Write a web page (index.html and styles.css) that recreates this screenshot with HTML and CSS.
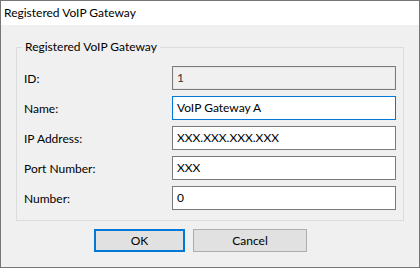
FILE: index.html
```html
<!DOCTYPE html>
<html>
<head>
<meta charset="utf-8">
<link rel="stylesheet" href="styles.css">
</head>
<body>
<div class="window">
  <div class="titlebar">Registered VoIP Gateway</div>
  <div class="content">
    <div class="group">
      <span class="group-title">Registered VoIP Gateway</span>
      <div class="row"><label class="lbl">ID:</label><div class="field readonly">1</div></div>
      <div class="row"><label class="lbl">Name:</label><div class="field focused">VoIP Gateway A</div></div>
      <div class="row"><label class="lbl">IP Address:</label><div class="field">XXX.XXX.XXX.XXX</div></div>
      <div class="row"><label class="lbl">Port Number:</label><div class="field">XXX</div></div>
      <div class="row"><label class="lbl">Number:</label><div class="field">0</div></div>
    </div>
    <div class="buttons">
      <button class="btn btn-ok">OK</button>
      <button class="btn btn-cancel">Cancel</button>
    </div>
  </div>
</div>
</body>
</html>
```
FILE: styles.css
```css
html, body {
  margin: 0;
  padding: 0;
  background: #ffffff;
}
body {
  font-family: "Lato", "Noto Sans", sans-serif;
  font-size: 12px;
  color: #000;
}
.window {
  width: 420px;
  height: 268px;
  box-sizing: border-box;
  border: 1px solid #767676;
  display: flex;
  flex-direction: column;
  background: #f0f0f0;
}
.titlebar {
  height: 24px;
  line-height: 24px;
  background: #ffffff;
  padding-left: 3px;
  color: #000;
}
.content {
  flex: 1;
  padding: 22px 15px 0 15px;
  display: flex;
  flex-direction: column;
}
.group {
  position: relative;
  border: 1px solid #dcdcdc;
  padding: 18px 7px 10px 7px;
  display: flex;
  flex-direction: column;
  gap: 6px;
}
.group-title {
  position: absolute;
  top: -9px;
  left: 5px;
  padding: 0 3px;
  background: #f0f0f0;
  line-height: 16px;
  color: #000;
}
.row {
  display: flex;
  align-items: center;
  height: 24px;
}
.lbl {
  width: 148px;
  color: #000;
}
.field {
  width: 224px;
  height: 24px;
  box-sizing: border-box;
  border: 1px solid #7a7a7a;
  background: #ffffff;
  padding-left: 4px;
  line-height: 22px;
  color: #000;
}
.field.readonly {
  background: #f0f0f0;
  box-shadow: inset 0 0 0 1px #e8e8e8;
  color: #333;
}
.field.focused {
  border-color: #0078d7;
}
.buttons {
  display: flex;
  gap: 8px;
  margin-top: 8px;
  padding-left: 78px;
}
.btn {
  font-family: inherit;
  font-size: 12px;
  height: 23px;
  box-sizing: border-box;
  background: #e1e1e1;
  border: 1px solid #adadad;
  border-radius: 0;
  color: #000;
  padding: 0;
  margin: 0;
}
.btn-ok {
  width: 91px;
  border: 2px solid #0078d7;
}
.btn-cancel {
  width: 114px;
}
```
